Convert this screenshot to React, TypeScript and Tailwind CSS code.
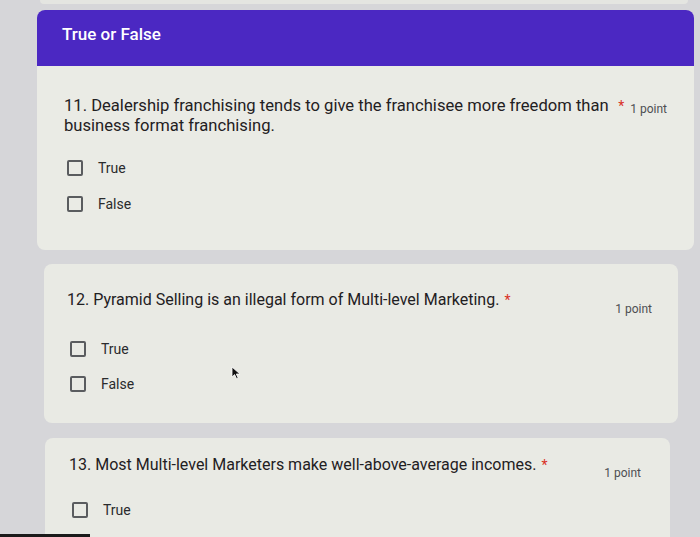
import React from "react";

type Option = { label: string };

const Checkbox = () => (
  <span className="block w-[16px] h-[16px] rounded-[2px] border-2 border-[#5a5c5f] shrink-0" />
);

function Options({ items, gap }: { items: Option[]; gap: string }) {
  return (
    <div className={`flex flex-col ${gap}`}>
      {items.map((o) => (
        <div key={o.label} className="flex items-center h-[20px]">
          <span className="ml-[3px]">
            <Checkbox />
          </span>
          <span className="ml-[15px] text-[14px] text-[#2a2b2d]">{o.label}</span>
        </div>
      ))}
    </div>
  );
}

function QuestionRow({ text, textClass, pointClass }: { text: string; textClass?: string; pointClass?: string }) {
  return (
    <div className="flex items-start">
      <span className={`leading-[20px] text-[#1f2022] ${textClass ?? "text-[16px]"}`}>{text}</span>
      <span className="ml-[5px] text-[14px] leading-[20px] text-[#d93025]">*</span>
      <span className={`ml-auto pl-[6px] whitespace-nowrap text-[12px] text-[#4d4f52] ${pointClass ?? ""}`}>1 point</span>
    </div>
  );
}

const tf: Option[] = [{ label: "True" }, { label: "False" }];

export default function App() {
  return (
    <div
      className="relative w-[700px] h-[537px] overflow-hidden bg-[#d6d6d9] flex flex-col"
      style={{ fontFamily: "Roboto, 'Liberation Sans', sans-serif" }}
    >
      {/* bottom of the previous card */}
      <div className="shrink-0 h-[4px] ml-[40px] mr-[12px] bg-[#e4e5e1] rounded-b-[6px]" />

      {/* section header + question 11 */}
      <div className="shrink-0 mt-[6px] ml-[37px] mr-[6px] rounded-[8px] overflow-hidden bg-[#eaebe5]">
        <div className="h-[56px] bg-[#4b28c2] pl-[25px] pt-[12px]">
          <span className="text-[17px] font-medium text-white">True or False</span>
        </div>
        <div className="pl-[27px] pr-[27px] pt-[30px] pb-[36px]">
          <QuestionRow
            text="11. Dealership franchising tends to give the franchisee more freedom than business format franchising."
            textClass="text-[16.6px] max-w-[556px]"
            pointClass="mt-[4px]"
          />
          <div className="mt-[22px]">
            <Options items={tf} gap="gap-[16px]" />
          </div>
        </div>
      </div>

      {/* question 12 */}
      <div className="shrink-0 mt-[14px] ml-[44px] mr-[22px] rounded-[8px] bg-[#e9eae4] pl-[23px] pr-[26px] pt-[26px] pb-[29px]">
        <QuestionRow
          text="12. Pyramid Selling is an illegal form of Multi-level Marketing."
          pointClass="mt-[10px]"
        />
        <div className="mt-[21px]">
          <Options items={tf} gap="gap-[15px]" />
        </div>
      </div>

      {/* question 13 */}
      <div className="shrink-0 mt-[15px] ml-[45px] mr-[30px] rounded-[8px] bg-[#e9eae4] pl-[24px] pr-[29px] pt-[17px] pb-[35px]">
        <QuestionRow
          text="13. Most Multi-level Marketers make well-above-average incomes."
          pointClass="mt-[9px]"
        />
        <div className="mt-[18px]">
          <Options items={tf} gap="gap-[15px]" />
        </div>
      </div>

      {/* mouse pointer */}
      <svg className="absolute left-[231px] top-[366px]" width="12" height="14" viewBox="0 0 12 14">
        <path d="M1 1 L1 11 L3.6 8.6 L5.6 12.8 L7.2 12 L5.3 8 L9 8 Z" fill="#111" stroke="#fff" strokeWidth="0.8" />
      </svg>

      {/* screen edge */}
      <div className="absolute left-0 bottom-0 w-[90px] h-[3px] bg-[#1a1a1a]" />
    </div>
  );
}
